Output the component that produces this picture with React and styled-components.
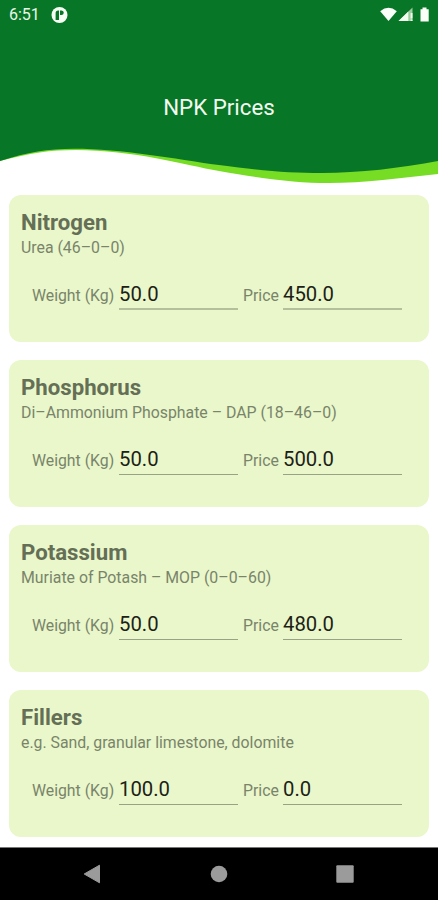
import React from "react"
import styled, { createGlobalStyle, ThemeProvider } from "styled-components"

const theme = {
  green: "#087627",
  lime: "#76dc24",
  card: "#e9f7ca",
  heading: "#646f56",
  label: "#79846a",
  value: "#1c2116",
  line: "#98a386",
  thickLine: "#b3c09b",
  nav: "#9b9b9b",
}

const GlobalStyle = createGlobalStyle`
  * {
    box-sizing: border-box;
  }
  body {
    margin: 0;
    background: #fff;
    font-family: Roboto, sans-serif;
  }
`

const Screen = styled.div`
  display: flex;
  flex-direction: column;
  width: 438px;
  height: 900px;
  overflow: hidden;
`

const Header = styled.header`
  display: flex;
  flex-direction: column;
  height: 195px;
  flex-shrink: 0;
`

const StatusBar = styled.div`
  display: flex;
  align-items: center;
  height: 30px;
  padding: 0 8px 0 9px;
  background: ${props => props.theme.green};
  color: #e9f6e9;
`

const Clock = styled.span`
  width: 42px;
  font-size: 16px;
  line-height: 30px;
`

const StatusIcons = styled.div`
  display: flex;
  align-items: center;
  margin-left: auto;
`

const TitleBar = styled.div`
  height: 115px;
  padding-top: 64px;
  background: ${props => props.theme.green};
  text-align: center;
`

const Title = styled.h1`
  margin: 0;
  color: #f3fbf1;
  font-size: 22.3px;
  font-weight: 400;
  line-height: 26px;
`

const Wave = styled.svg`
  display: block;
  width: 438px;
  height: 50px;
`

const CardList = styled.main`
  display: flex;
  flex-direction: column;
  gap: 18.3px;
  height: 652px;
  padding: 0 9px;
`

const Card = styled.section`
  height: 146.7px;
  flex-shrink: 0;
  padding: 14px 12px 0;
  border-radius: 12px;
  background: ${props => props.theme.card};
`

const Name = styled.h2`
  margin: 0 0 2px;
  color: ${props => props.theme.heading};
  font-size: 22.2px;
  font-weight: 700;
  line-height: 26px;
`

const Detail = styled.p`
  margin: 0;
  color: ${props => props.theme.label};
  font-size: 15.85px;
  line-height: 22px;
`

const Fields = styled.div`
  display: flex;
  margin-top: 21px;
  padding-left: 11px;
`

const Label = styled.span`
  width: ${props => props.$width};
  padding-top: 6px;
  color: ${props => props.theme.label};
  font-size: 15.8px;
  line-height: 20px;
  white-space: nowrap;
`

const Value = styled.span`
  width: 119px;
  height: 30px;
  margin-right: 5px;
  border-bottom: ${props =>
    props.$thick
      ? `2px solid ${props.theme.thickLine}`
      : `1px solid ${props.theme.line}`};
  color: ${props => props.theme.value};
  font-size: 20.3px;
  line-height: 29px;
`

const NavBar = styled.nav`
  display: flex;
  justify-content: space-between;
  align-items: center;
  height: 53px;
  flex-shrink: 0;
  padding: 0 84px 0 83px;
  border-top: 1px solid #777;
  background: #000;
`

const nutrients = [
  { name: "Nitrogen", detail: "Urea (46–0–0)", weight: "50.0", price: "450.0" },
  {
    name: "Phosphorus",
    detail: "Di–Ammonium Phosphate – DAP (18–46–0)",
    weight: "50.0",
    price: "500.0",
  },
  {
    name: "Potassium",
    detail: "Muriate of Potash – MOP (0–0–60)",
    weight: "50.0",
    price: "480.0",
  },
  {
    name: "Fillers",
    detail: "e.g. Sand, granular limestone, dolomite",
    weight: "100.0",
    price: "0.0",
  },
]

const AppBadge = () => (
  <svg width="17" height="17" viewBox="0 0 17 17">
    <circle cx="8.5" cy="8" r="8" fill="#f7fff4" />
    <path
      d="M4.6 13V6.2Q4.6 3.6 7.2 3.6H8V13ZM9 3.6H10.6Q12.8 3.8 12.8 5.8Q12.6 8 10.4 8H9Z"
      fill={theme.green}
    />
  </svg>
)

const SystemIcons = () => (
  <svg width="50" height="16" viewBox="0 0 50 16">
    <path d="M0.2 4.2Q8.5-2.6 16.8 4.2L8.5 14Z" fill="#fafff8" />
    <path d="M32.5 0.5V14H18.5Z" fill="#9ccb9f" />
    <path d="M28.3 4.5V14H18.5ZM30.6 6H32.5V11.5H30.6ZM30.6 12.5H32.5V14H30.6Z" fill="#f4fcf0" />
    <path d="M40.5 2.2H42.5V0.5H46.5V2.2H48.7V14.5H40.5Z" fill="#fafff8" />
  </svg>
)

const NutrientCard = ({ nutrient, thick }) => {
  return (
    <Card>
      <Name>{nutrient.name}</Name>
      <Detail>{nutrient.detail}</Detail>
      <Fields>
        <Label $width="87px">Weight (Kg)</Label>
        <Value $thick={thick}>{nutrient.weight}</Value>
        <Label $width="40px">Price</Label>
        <Value $thick={thick}>{nutrient.price}</Value>
      </Fields>
    </Card>
  )
}

const App = () => {
  return (
    <ThemeProvider theme={theme}>
      <GlobalStyle />
      <Screen>
        <Header>
          <StatusBar>
            <Clock>6:51</Clock>
            <AppBadge />
            <StatusIcons>
              <SystemIcons />
            </StatusIcons>
          </StatusBar>
          <TitleBar>
            <Title>NPK Prices</Title>
          </TitleBar>
          <Wave viewBox="0 145 438 50">
            <path
              d="M0 145V161C30 153 50 150 76 150C133 150 185 165 219 171C265 179 296 183 329 183C363 183 402 178 438 174V145Z"
              fill={theme.lime}
            />
            <path
              d="M0 145V161C28 152 48 148.7 74 148.7C122 148.7 175 159 219 165C264 171 290 173 322 173C358 173 402 168 438 161V145Z"
              fill={theme.green}
            />
          </Wave>
        </Header>
        <CardList>
          {nutrients.map((nutrient, i) => (
            <NutrientCard key={nutrient.name} nutrient={nutrient} thick={i === 0} />
          ))}
        </CardList>
        <NavBar>
          <svg width="18" height="20" viewBox="0 0 18 20">
            <path d="M1.2 10L16.5 1.2V18.8Z" fill={theme.nav} stroke={theme.nav} strokeLinejoin="round" />
          </svg>
          <svg width="18" height="18" viewBox="0 0 18 18">
            <circle cx="9" cy="9" r="8.3" fill={theme.nav} />
          </svg>
          <svg width="18" height="18" viewBox="0 0 18 18">
            <rect x="0.3" y="0.3" width="17.4" height="17.4" rx="1" fill={theme.nav} />
          </svg>
        </NavBar>
      </Screen>
    </ThemeProvider>
  )
}

export default App
